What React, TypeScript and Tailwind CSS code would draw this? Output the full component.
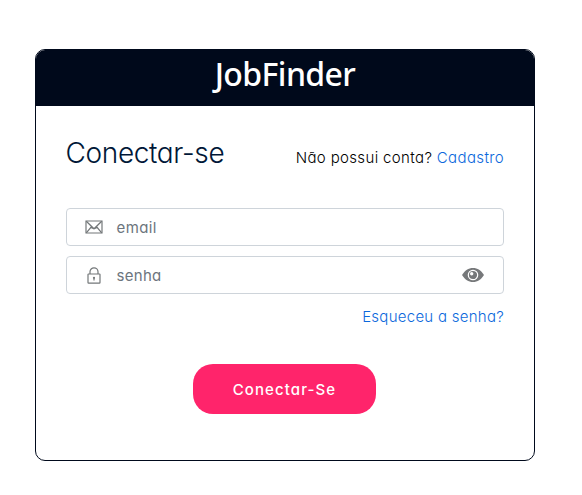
import React from "react";

const muli = "font-['Inter','Lato',sans-serif] [font-feature-settings:'cv11']";

function Envelope() {
  return (
    <svg width="18" height="14" viewBox="0 0 18 14" fill="none" stroke="#737779" strokeWidth="1.2">
      <path d="M1 1h16v12H1z" />
      <path d="M1.3 1.2 9 8.8l7.7-7.6M1.3 12.8 6.2 7 7.6 8.6M16.7 12.8 11.8 7l-1.4 1.6" />
    </svg>
  );
}

function Lock() {
  return (
    <svg width="14" height="17" viewBox="0 0 14 17" fill="none" stroke="#737779" strokeWidth="1.2">
      <rect x="1" y="7" width="12" height="9.2" rx="0.6" />
      <path d="M3 7V4.8a4 4 0 0 1 8 0V7" />
      <circle cx="7" cy="10.8" r="1.1" fill="#737779" stroke="none" />
      <path d="M7 11v2.5" />
    </svg>
  );
}

function Eye() {
  return (
    <svg width="22" height="14" viewBox="0 0 22 14">
      <path d="M0 7C2.8 2.4 6.5 0 11 0s8.2 2.4 11 7c-2.8 4.6-6.5 7-11 7S2.8 11.6 0 7z" fill="#76787a" />
      <circle cx="11" cy="7" r="4.7" fill="#76787a" stroke="#fff" strokeWidth="1.2" />
      <circle cx="9.7" cy="5.8" r="1.7" fill="#fff" />
    </svg>
  );
}

export default function App() {
  return (
    <div className={`h-[495px] w-[582px] bg-white pl-[35px] pt-[49px] ${muli}`}>
      <main className="h-[412px] w-[500px] overflow-hidden rounded-[10px] border border-[#00091b] bg-white">
        <header className="flex h-[56px] justify-center bg-[#00091b] pt-[2px] font-['Noto_Sans',sans-serif] text-[32px] leading-[44px] text-white">
          <h1 className="whitespace-nowrap font-medium tracking-[-0.6px]">JobFinder</h1>
        </header>
        <div className="px-[30px]">
          <div className="flex h-[102px] items-start justify-between whitespace-nowrap">
            <h2 className="-ml-[0.5px] mt-[27px] text-[28px] font-light leading-[40px] tracking-[-0.35px] text-[#001737]">Conectar-se</h2>
            <p className="mt-[40px] text-[15px] font-light leading-6 tracking-[0.36px] text-black">
              Não possui conta? <a className="text-[#0b68dc]">Cadastro</a>
            </p>
          </div>
          <form className="flex flex-col gap-[10px] text-[15px] font-normal leading-6 tracking-[0.4px] text-[#6c757d]">
            <label className="flex h-[38px] items-center rounded border border-[#ced4da] pl-[18px]">
              <Envelope />
              <span className="ml-[13.5px] pt-[2px]">email</span>
            </label>
            <label className="flex h-[38px] items-center rounded border border-[#ced4da] pl-[20px] pr-[19px]">
              <Lock />
              <span className="ml-[15.5px] flex-1 pt-[2px] tracking-[0.3px]">senha</span>
              <Eye />
            </label>
          </form>
          <div className="mt-[11px] flex h-6 justify-end text-[15px] font-light leading-6 tracking-[0.27px] text-[#0b68dc]">
            <a className="whitespace-nowrap">Esqueceu a senha?</a>
          </div>
          <div className="mt-[35px] flex justify-center pr-[2px]">
            <button className="h-[50px] w-[183px] whitespace-nowrap rounded-[20px] bg-[#ff246b] pl-[1px] pt-[2px] text-[15px] font-medium tracking-[1.1px] text-white">
              Conectar-Se
            </button>
          </div>
        </div>
      </main>
    </div>
  );
}
